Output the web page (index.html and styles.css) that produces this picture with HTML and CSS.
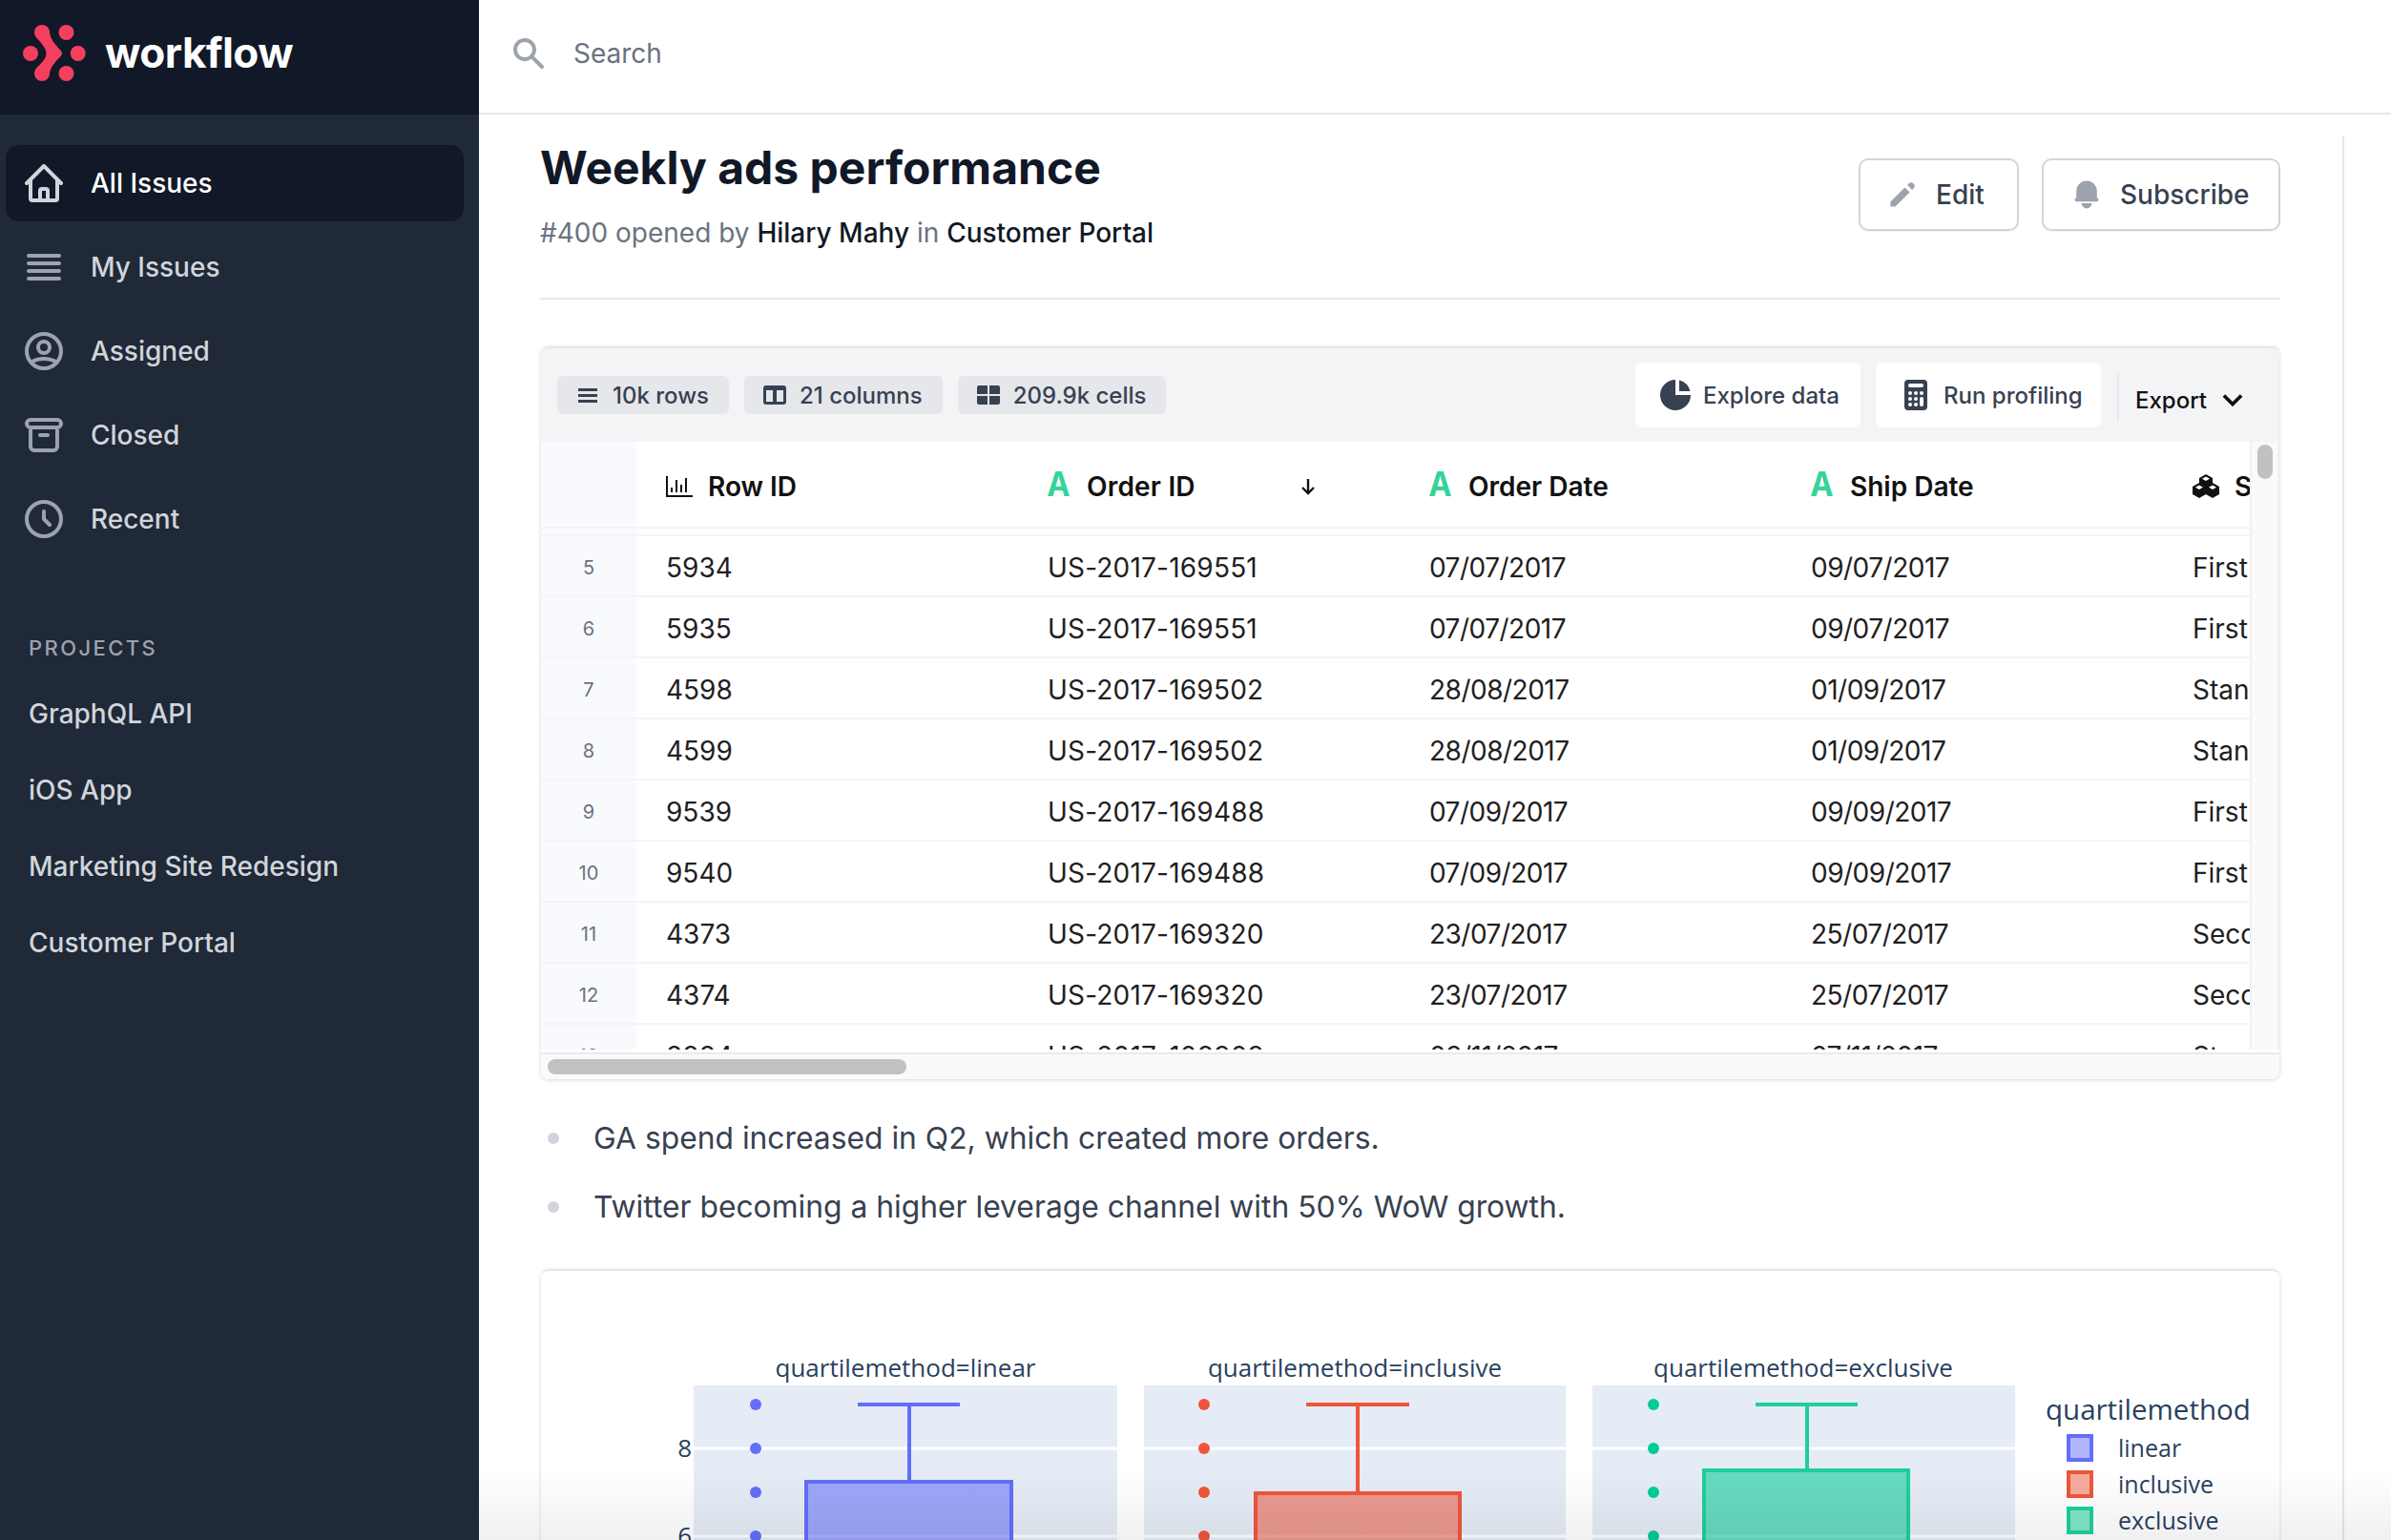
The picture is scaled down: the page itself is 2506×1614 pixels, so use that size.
FILE: index.html
```html
<!DOCTYPE html>
<html>
<head>
  <title>Weekly ads performance</title>
  <link rel="stylesheet" href="styles.css">
</head>
<body>
  <aside class="sidebar">
    <div class="brand">
      <svg class="logo" viewBox="0 0 100 112" width="100" height="112">
        <circle cx="44" cy="34" r="8"/>
        <circle cx="44" cy="77" r="8"/>
        <circle cx="69.5" cy="34" r="8"/>
        <circle cx="69.5" cy="77" r="8"/>
        <circle cx="32" cy="56" r="8"/>
        <circle cx="81.7" cy="56" r="8"/>
        <path d="M51.5 31C52 37 54 42 58 46.500L64 53.500Q66 56 64 58.500L58 65C54 69.500 52 74 51.500 80L38 72C42 67 48.500 62 48.500 56C48.500 50 42 44 38 39Z"/>
      </svg>
      <span class="brand-name">workflow</span>
    </div>
    <nav class="nav">
      <a class="nav-item active">
        <svg class="nav-icon" viewBox="2 2 20 20"><path d="M3 12l2-2m0 0l7-7 7 7M5 10v10a1 1 0 001 1h3m10-11l2 2m-2-2v10a1 1 0 01-1 1h-3m-6 0a1 1 0 001-1v-4a1 1 0 011-1h2a1 1 0 011 1v4a1 1 0 001 1m-6 0h6"/></svg>
        All Issues
      </a>
      <a class="nav-item">
        <svg class="nav-icon" viewBox="2 2 20 20"><path d="M4 6h16M4 10h16M4 14h16M4 18h16"/></svg>
        My Issues
      </a>
      <a class="nav-item">
        <svg class="nav-icon" viewBox="2 2 20 20"><path d="M5.121 17.804A13.937 13.937 0 0112 16c2.500 0 4.847.655 6.879 1.804M15 10a3 3 0 11-6 0 3 3 0 016 0zm6 2a9 9 0 11-18 0 9 9 0 0118 0z"/></svg>
        Assigned
      </a>
      <a class="nav-item">
        <svg class="nav-icon" viewBox="2 2 20 20"><path d="M5 8h14M5 8a2 2 0 110-4h14a2 2 0 110 4M5 8v10a2 2 0 002 2h10a2 2 0 002-2V8m-9 4h4"/></svg>
        Closed
      </a>
      <a class="nav-item">
        <svg class="nav-icon" viewBox="2 2 20 20"><path d="M12 8v4l3 3m6-3a9 9 0 11-18 0 9 9 0 0118 0z"/></svg>
        Recent
      </a>
    </nav>
    <div class="projects">
      <div class="projects-title">PROJECTS</div>
      <a class="project">GraphQL API</a>
      <a class="project">iOS App</a>
      <a class="project">Marketing Site Redesign</a>
      <a class="project">Customer Portal</a>
    </div>
  </aside>

  <main class="main">
    <header class="topbar">
      <svg class="search-icon" viewBox="0 0 20 20"><path fill-rule="evenodd" d="M8 4a4 4 0 100 8 4 4 0 000-8zM2 8a6 6 0 1110.890 3.476l4.817 4.817a1 1 0 01-1.414 1.414l-4.816-4.816A6 6 0 012 8z" clip-rule="evenodd"/></svg>
      <span class="search-text">Search</span>
    </header>

    <div class="content">
      <div class="article">
        <div class="issue-head">
          <div>
            <h1 class="issue-title">Weekly ads performance</h1>
            <p class="issue-sub">#400 opened by <b>Hilary Mahy</b> in <b>Customer Portal</b></p>
          </div>
          <div class="issue-actions">
            <button class="btn btn-edit">
              <svg class="btn-icon" viewBox="0 0 20 20"><path d="M13.586 3.586a2 2 0 112.828 2.828l-.793.793-2.828-2.828.793-.793zM11.379 5.793L3 14.172V17h2.828l8.380-8.379-2.830-2.828z"/></svg>
              Edit
            </button>
            <button class="btn btn-sub">
              <svg class="btn-icon" viewBox="0 0 20 20"><path d="M10 2a6 6 0 00-6 6v3.586l-.707.707A1 1 0 004 14h12a1 1 0 00.707-1.707L16 11.586V8a6 6 0 00-6-6zM10 18a3 3 0 01-3-3h6a3 3 0 01-3 3z"/></svg>
              Subscribe
            </button>
          </div>
        </div>

        <section class="data-card">
          <div class="toolbar">
            <span class="pill">
              <svg class="pill-icon" viewBox="0 0 24 20"><path d="M2 3h20v3H2zM2 9h20v3H2zM2 15h20v3H2z"/></svg>
              10k rows
            </span>
            <span class="pill">
              <svg class="pill-icon" viewBox="0 0 24 20"><path fill-rule="evenodd" d="M3 0h18a3 3 0 013 3v14a3 3 0 01-3 3H3a3 3 0 01-3-3V3a3 3 0 013-3zm0 5v12h7V5zm11 0v12h7V5z"/></svg>
              21 columns
            </span>
            <span class="pill">
              <svg class="pill-icon" viewBox="0 0 24 20"><path d="M0 2a2 2 0 012-2h9v9H0zM13 0h9a2 2 0 012 2v7H13zM0 11h11v9H2a2 2 0 01-2-2zM13 11h11v7a2 2 0 01-2 2h-9z"/></svg>
              209.9k cells
            </span>
            <span class="toolbar-gap"></span>
            <button class="tool-btn">
              <svg class="tool-icon" viewBox="0 0 20 20"><path d="M2 10a8 8 0 018-8v8h8a8 8 0 11-16 0z"/><path d="M12 2.252A8.014 8.014 0 0117.748 8H12V2.252z"/></svg>
              Explore data
            </button>
            <button class="tool-btn">
              <svg class="tool-icon" viewBox="0 0 20 20"><path fill-rule="evenodd" d="M6 2a2 2 0 00-2 2v12a2 2 0 002 2h8a2 2 0 002-2V4a2 2 0 00-2-2H6zm1 2a1 1 0 000 2h6a1 1 0 100-2H7zm6 7a1 1 0 011 1v3a1 1 0 11-2 0v-3a1 1 0 011-1zm-3 3a1 1 0 100 2h.01a1 1 0 100-2H10zm-4 1a1 1 0 011-1h.01a1 1 0 110 2H7a1 1 0 01-1-1zm1-4a1 1 0 100 2h.01a1 1 0 100-2H7zm2 1a1 1 0 011-1h.01a1 1 0 110 2H10a1 1 0 01-1-1zm4-4a1 1 0 100 2h.01a1 1 0 100-2H13zM9 9a1 1 0 011-1h.01a1 1 0 110 2H10a1 1 0 01-1-1zM7 8a1 1 0 000 2h.01a1 1 0 000-2H7z" clip-rule="evenodd"/></svg>
              Run profiling
            </button>
            <span class="export">
              Export
              <svg class="export-chevron" viewBox="0 0 20 14"><path d="M2 3l8 8 8-8"/></svg>
            </span>
          </div>

          <div class="grid-area">
            <div class="grid">
              <div class="row head-row">
                <div class="num"></div>
                <div class="head-cell">
                  <svg class="head-icon" viewBox="0 0 28 22"><path d="M1 0v21h27M6 17v-5M11 17V4M16 17V9M21 17V2" /></svg>
                  Row ID
                </div>
                <div class="head-cell"><span class="type-a">A</span>Order ID
                  <svg class="sort-arrow" viewBox="0 0 16 18"><path d="M8 1v15M2 10l6 6 6-6"/></svg>
                </div>
                <div class="head-cell"><span class="type-a">A</span>Order Date</div>
                <div class="head-cell"><span class="type-a">A</span>Ship Date</div>
                <div class="head-cell">
                  <svg class="cube-icon" viewBox="0 0 28 25">
                    <path d="M14 0l7 4v8l-7 4-7-4V4z"/>
                    <path d="M7 9l7 4v8l-7 4-7-4v-8z"/>
                    <path d="M21 9l7 4v8l-7 4-7-4v-8z"/>
                    <path class="cube-top" d="M14 2.500l4 2.300-4 2.300-4-2.300zM7 11.500l4 2.300-4 2.300-4-2.300zM21 11.500l4 2.300-4 2.300-4-2.300z"/>
                  </svg>
                  Ship Mode
                </div>
              </div>
              <div class="row spacer-row"><div class="num"></div></div>
              <div class="row"><div class="num">5</div><div>5934</div><div>US-2017-169551</div><div>07/07/2017</div><div>09/07/2017</div><div>First Class</div></div>
              <div class="row"><div class="num">6</div><div>5935</div><div>US-2017-169551</div><div>07/07/2017</div><div>09/07/2017</div><div>First Class</div></div>
              <div class="row"><div class="num">7</div><div>4598</div><div>US-2017-169502</div><div>28/08/2017</div><div>01/09/2017</div><div>Standard Class</div></div>
              <div class="row"><div class="num">8</div><div>4599</div><div>US-2017-169502</div><div>28/08/2017</div><div>01/09/2017</div><div>Standard Class</div></div>
              <div class="row"><div class="num">9</div><div>9539</div><div>US-2017-169488</div><div>07/09/2017</div><div>09/09/2017</div><div>First Class</div></div>
              <div class="row"><div class="num">10</div><div>9540</div><div>US-2017-169488</div><div>07/09/2017</div><div>09/09/2017</div><div>First Class</div></div>
              <div class="row"><div class="num">11</div><div>4373</div><div>US-2017-169320</div><div>23/07/2017</div><div>25/07/2017</div><div>Second Class</div></div>
              <div class="row"><div class="num">12</div><div>4374</div><div>US-2017-169320</div><div>23/07/2017</div><div>25/07/2017</div><div>Second Class</div></div>
              <div class="row"><div class="num">13</div><div>8884</div><div>US-2017-108909</div><div>03/11/2017</div><div>07/11/2017</div><div>Standard Class</div></div>
            </div>
            <div class="vscroll"><div class="vthumb"></div></div>
          </div>
          <div class="hscroll"><div class="hthumb"></div></div>
        </section>

        <ul class="notes">
          <li>GA spend increased in Q2, which created more orders.</li>
          <li>Twitter becoming a higher leverage channel with 50% WoW growth.</li>
        </ul>

        <section class="chart-card">
          <svg class="chart" viewBox="567 1332 1823 282" width="1823" height="282">
            <text class="sub-title" x="949" y="1443">quartilemethod=linear</text>
            <text class="sub-title" x="1420" y="1443">quartilemethod=inclusive</text>
            <text class="sub-title" x="1890" y="1443">quartilemethod=exclusive</text>

            <rect class="plot-bg" x="727" y="1452" width="444" height="170"/>
            <rect class="plot-bg" x="1199" y="1452" width="442" height="170"/>
            <rect class="plot-bg" x="1669" y="1452" width="443" height="170"/>
            <path class="grid-line" d="M727 1518h444M727 1610h444M1199 1518h442M1199 1610h442M1669 1518h443M1669 1610h443"/>
            <text class="tick" x="725" y="1527">8</text>
            <text class="tick" x="725" y="1619">6</text>

            <g class="box-blue">
              <circle cx="792" cy="1472" r="6"/><circle cx="792" cy="1518" r="6"/><circle cx="792" cy="1564" r="6"/><circle cx="792" cy="1610" r="6"/>
              <path d="M899 1472h107M953 1472v79"/>
              <rect x="845" y="1553" width="215" height="90"/>
            </g>
            <g class="box-red">
              <circle cx="1262" cy="1472" r="6"/><circle cx="1262" cy="1518" r="6"/><circle cx="1262" cy="1564" r="6"/><circle cx="1262" cy="1610" r="6"/>
              <path d="M1369 1472h108M1423 1472v91"/>
              <rect x="1316" y="1565" width="214" height="90"/>
            </g>
            <g class="box-green">
              <circle cx="1733" cy="1472" r="6"/><circle cx="1733" cy="1518" r="6"/><circle cx="1733" cy="1564" r="6"/><circle cx="1733" cy="1610" r="6"/>
              <path d="M1840 1472h107M1894 1472v67"/>
              <rect x="1786" y="1541" width="214" height="90"/>
            </g>

            <text class="legend-title" x="2144" y="1488">quartilemethod</text>
            <rect class="swatch swatch-blue" x="2168" y="1505" width="24" height="25"/>
            <rect class="swatch swatch-red" x="2168" y="1543" width="24" height="25"/>
            <rect class="swatch swatch-green" x="2168" y="1581" width="24" height="25"/>
            <text class="legend-label" x="2220" y="1527">linear</text>
            <text class="legend-label" x="2220" y="1565">inclusive</text>
            <text class="legend-label" x="2220" y="1603">exclusive</text>
          </svg>
        </section>
      </div>
      <div class="rail"></div>
    </div>
    <div class="bottom-fade"></div>
  </main>
</body>
</html>
```

FILE: styles.css
```css
* {
    box-sizing: border-box;
}
html, body {
    margin: 0;
    height: 100%;
}
body {
    display: flex;
    height: 1614px;
    overflow: hidden;
    font-family: Inter, "Liberation Sans", sans-serif;
    background-color: #fff;
    color: #111827;
}

/* sidebar */
.sidebar {
    width: 502px;
    flex-shrink: 0;
    background-color: #1f2937;
}
.brand {
    height: 120px;
    background-color: #111827;
    display: flex;
}
.logo {
    fill: #f43f5e;
    flex-shrink: 0;
    margin-right: 10px;
}
.brand-name {
    color: #fff;
    font-size: 44px;
    font-weight: 700;
    line-height: 110px;
    letter-spacing: -0.5px;
}
.nav {
    display: flex;
    flex-direction: column;
    gap: 8px;
    padding: 32px 16px 0 6px;
}
.nav-item {
    height: 80px;
    display: flex;
    align-items: center;
    gap: 29px;
    padding-left: 20px;
    border-radius: 14px;
    font-size: 28px;
    font-weight: 500;
    color: #d1d5db;
}
.nav-item.active {
    background-color: #111827;
    color: #fff;
}
.nav-icon {
    width: 40px;
    height: 40px;
    fill: none;
    stroke: #9ca3af;
    stroke-width: 2;
    stroke-linecap: round;
    stroke-linejoin: round;
}
.active .nav-icon {
    stroke: #d1d5db;
}
.projects {
    padding: 0 30px;
    margin-top: 79px;
}
.projects-title {
    font-size: 22px;
    font-weight: 500;
    letter-spacing: 2.4px;
    color: #9ca3af;
    line-height: 32px;
    margin-bottom: 13px;
}
.project {
    display: block;
    height: 80px;
    line-height: 80px;
    font-size: 28px;
    font-weight: 500;
    color: #d1d5db;
}

/* main column */
.main {
    flex: 1;
    min-width: 0;
    display: flex;
    flex-direction: column;
    position: relative;
    overflow: hidden;
}
.topbar {
    height: 120px;
    flex-shrink: 0;
    border-bottom: 2px solid #e5e7eb;
    display: flex;
    align-items: center;
    padding-left: 32px;
    padding-bottom: 6px;
    gap: 27px;
}
.search-icon {
    width: 40px;
    height: 40px;
    fill: #9ca3af;
}
.search-text {
    font-size: 28px;
    color: #6b7280;
}
.content {
    flex: 1;
    display: flex;
    min-height: 0;
    padding-left: 64px;
}
.article {
    width: 1824px;
    flex-shrink: 0;
    padding-top: 26px;
}
.rail {
    width: 2px;
    margin-left: 65px;
    margin-top: 23px;
    background-color: #e5e7eb;
}
.bottom-fade {
    position: absolute;
    left: 0;
    right: 0;
    bottom: 0;
    height: 74px;
    background: linear-gradient(rgba(0, 0, 0, 0), rgba(0, 0, 0, 0.06));
}

/* issue header */
.issue-head {
    display: flex;
    justify-content: space-between;
    align-items: flex-start;
    height: 168px;
    border-bottom: 2px solid #e5e7eb;
}
.issue-title {
    margin: 0;
    font-size: 48px;
    line-height: 60px;
    font-weight: 700;
}
.issue-sub {
    margin: 18px 0 0;
    font-size: 28px;
    line-height: 40px;
    color: #6b7280;
}
.issue-sub b {
    font-weight: 500;
    color: #111827;
}
.issue-actions {
    display: flex;
    gap: 24px;
    margin-top: 20px;
}
.btn {
    height: 76px;
    display: flex;
    align-items: center;
    background-color: #fff;
    border: 2px solid #d1d5db;
    border-radius: 10px;
    box-shadow: 0 1px 2px rgba(0, 0, 0, 0.05);
    font-family: inherit;
    font-size: 28px;
    font-weight: 500;
    color: #374151;
}
.btn-edit {
    width: 168px;
    padding-left: 26px;
    gap: 17px;
}
.btn-sub {
    width: 250px;
    padding-left: 27px;
    gap: 17px;
}
.btn-icon {
    width: 36px;
    height: 36px;
    fill: #9ca3af;
}

/* data table card */
.data-card {
    margin: 49px 1px 0;
    height: 768px;
    border-radius: 8px;
    overflow: hidden;
    border-top: 2px solid #e5e7eb;
    box-shadow: 0 1px 4px rgba(0, 0, 0, 0.16);
}
.toolbar {
    height: 98px;
    background-color: #f3f4f6;
    display: flex;
    align-items: center;
    padding: 0 0 0 17px;
    gap: 16px;
}
.pill {
    height: 40px;
    display: flex;
    align-items: center;
    gap: 14px;
    padding: 0 21px 0 20px;
    background-color: #e5e7eb;
    border-radius: 6px;
    font-size: 24px;
    font-weight: 500;
    color: #374151;
}
.pill-icon {
    width: 24px;
    height: 20px;
    fill: #374151;
}
.toolbar-gap {
    flex: 1;
}
.tool-btn {
    height: 68px;
    width: 236px;
    display: flex;
    align-items: center;
    gap: 9px;
    padding: 0 0 0 22px;
    border: none;
    border-radius: 6px;
    background-color: #fff;
    font-family: inherit;
    font-size: 24px;
    font-weight: 500;
    color: #374151;
}
.tool-icon {
    width: 40px;
    height: 40px;
    fill: #374151;
}
.export {
    width: 170px;
    height: 50px;
    margin-left: 1px;
    margin-top: 4px;
    border-left: 2px solid #e5e7eb;
    display: flex;
    align-items: center;
    gap: 15px;
    padding: 6px 0 0 17px;
    font-size: 24px;
    font-weight: 500;
    color: #111;
}
.export-chevron {
    width: 24px;
    height: 16px;
    fill: none;
    stroke: #111;
    stroke-width: 3.200;
}

.grid-area {
    display: flex;
    height: 640px;
    background-color: #fff;
}
.grid {
    flex: 1;
    min-width: 0;
    height: 637px;
    overflow: hidden;
}
.row {
    display: grid;
    grid-template-columns: 100px repeat(5, 400px);
    height: 64px;
    align-items: center;
    border-bottom: 2px solid #f3f4f6;
    font-size: 28px;
    color: #1f2021;
    white-space: nowrap;
}
.row > div {
    padding-left: 31px;
    padding-top: 4px;
}
.row > div:nth-child(3) {
    letter-spacing: 0.2px;
}
.row:not(.head-row) > div:nth-child(4),
.row:not(.head-row) > div:nth-child(5) {
    letter-spacing: -0.5px;
}
.row > .num {
    height: 100%;
    padding: 4px 0 0;
    background-color: #f8fafe;
    display: flex;
    align-items: center;
    justify-content: center;
    font-size: 20px;
    color: #6b7280;
}
.head-row {
    height: 91px;
    font-weight: 600;
    color: #111;
}
.spacer-row {
    height: 8px;
}
.head-row > .head-cell {
    display: flex;
    align-items: center;
    letter-spacing: 0;
}
.head-icon {
    width: 28px;
    height: 22px;
    margin-right: 16px;
    fill: none;
    stroke: #111;
    stroke-width: 2;
}
.type-a {
    width: 25px;
    margin-right: 16px;
    font-family: "Liberation Mono", monospace;
    font-weight: 700;
    font-size: 38px;
    color: #34d399;
    line-height: 1;
}
.sort-arrow {
    width: 16px;
    height: 18px;
    margin-left: 110px;
    fill: none;
    stroke: #111;
    stroke-width: 2.400;
}
.cube-icon {
    width: 28px;
    height: 25px;
    margin-right: 16px;
    fill: #111;
}
.cube-top {
    fill: #fff;
}
.vscroll {
    width: 31px;
    height: 637px;
    flex-shrink: 0;
    background-color: #fafafa;
    border-left: 2px solid #f0f0f0;
    border-right: 2px solid #f0f0f0;
    padding: 3px 6px;
}
.vthumb {
    width: 16px;
    height: 36px;
    border-radius: 8px;
    background-color: #c1c1c1;
}
.hscroll {
    height: 28px;
    background-color: #fafafa;
    border-top: 2px solid #ebebeb;
    padding: 5px 7px;
}
.hthumb {
    width: 376px;
    height: 16px;
    border-radius: 8px;
    background-color: #c1c1c1;
}

/* notes */
.notes {
    list-style: none;
    margin: 38px 0 0;
    padding: 0 0 0 8px;
    display: flex;
    flex-direction: column;
    gap: 24px;
    font-size: 31.8px;
    line-height: 48px;
    color: #374151;
}
.notes li {
    display: flex;
    align-items: center;
    gap: 36px;
}
.notes li::before {
    content: "";
    width: 12px;
    height: 12px;
    border-radius: 50%;
    background-color: #d1d5db;
}

/* chart card */
.chart-card {
    margin: 41px 1px 0;
    height: 300px;
    border-top: 2px solid #e5e7eb;
    border-radius: 8px;
    box-shadow: 0 1px 4px rgba(0, 0, 0, 0.16);
    overflow: hidden;
}
.chart {
    display: block;
    font-family: "Open Sans", sans-serif;
}
.sub-title {
    font-size: 26px;
    fill: #2a3f5f;
    text-anchor: middle;
}
.plot-bg {
    fill: #e5ecf6;
}
.grid-line {
    stroke: #fff;
    stroke-width: 3;
}
.tick {
    font-size: 26px;
    fill: #2a3f5f;
    text-anchor: end;
}
.box-blue { fill: #636efa; stroke: #636efa; }
.box-red { fill: #ef553b; stroke: #ef553b; }
.box-green { fill: #00cc96; stroke: #1fcf99; }
.box-blue circle, .box-red circle, .box-green circle {
    stroke: none;
}
.box-blue path, .box-red path, .box-green path {
    fill: none;
    stroke-width: 4;
}
.box-blue rect, .box-red rect, .box-green rect {
    fill-opacity: 0.55;
    stroke-width: 4;
}
.legend-title {
    font-size: 29.5px;
    fill: #2a3f5f;
}
.legend-label {
    font-size: 25px;
    fill: #2a3f5f;
}
.swatch {
    stroke-width: 4;
}
.swatch-blue { fill: #b1b6fc; stroke: #636efa; }
.swatch-red { fill: #f7aa9d; stroke: #ef553b; }
.swatch-green { fill: #80e5cb; stroke: #1fcf99; }
```
